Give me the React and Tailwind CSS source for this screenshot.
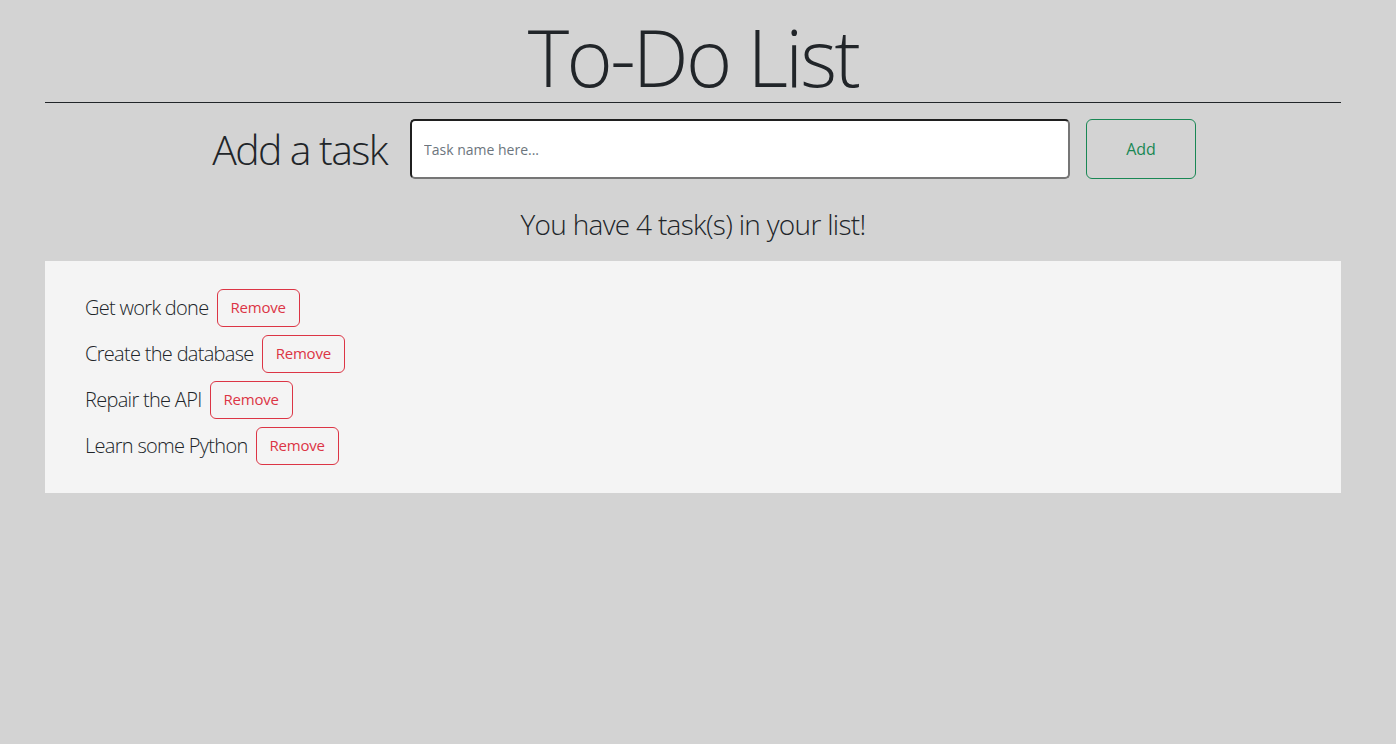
import { useState } from 'react';

const FONT = { fontFamily: '"Open Sans", "Noto Sans", sans-serif' };

// ─── Task Row ────────────────────────────────────────────────────────────────
function TaskRow({ task, onRemove }) {
  return (
    <div className="flex items-center gap-2">
      <span className="text-[20px] font-light text-[#212529] leading-[1.2] tracking-[-0.7px]">{task.name}</span>
      <button
        onClick={() => onRemove(task.id)}
        className="h-[38px] px-[13px] text-[15px] text-[#dc3545] border border-[#dc3545] rounded-[6px] bg-transparent tracking-[-0.2px]"
      >
        Remove
      </button>
    </div>
  );
}

// ─── Main ────────────────────────────────────────────────────────────────────
export default function App() {
  const [tasks, setTasks] = useState([
    { id: 1, name: 'Get work done' },
    { id: 2, name: 'Create the database' },
    { id: 3, name: 'Repair the API' },
    { id: 4, name: 'Learn some Python' },
  ]);
  const [draft, setDraft] = useState('');

  const addTask = () => {
    if (!draft.trim()) return;
    setTasks(t => [...t, { id: Date.now(), name: draft.trim() }]);
    setDraft('');
  };

  return (
    <div className="min-h-screen bg-[#d3d3d3] text-[#212529]" style={FONT}>
      <div className="ml-[45px] w-[1296px]">
        {/* Title */}
        <div className="pt-[17px] text-center">
          <h1 className="text-[79px] font-light leading-none h-[80px] tracking-[-2.7px]">To-Do List</h1>
        </div>
        <div className="mt-[5px] h-px bg-[#212529]" />

        {/* Add row */}
        <div className="mt-[16px] flex items-center h-[60px]">
          <div className="w-[342px] text-right text-[41px] font-light leading-none tracking-[-1.6px]">
            Add a task
          </div>
          <input
            value={draft}
            onChange={e => setDraft(e.target.value)}
            placeholder="Task name here..."
            className="ml-[23px] w-[660px] h-[60px] px-[12px] text-[14px] bg-white rounded-[5px] border-2 border-t-[#1f1f1f] border-l-[#1f1f1f] border-b-[#767676] border-r-[#767676] placeholder:text-[#6c757d] outline-none"
          />
          <button
            onClick={addTask}
            className="ml-[16px] w-[110px] h-[60px] text-[16px] text-[#198754] border border-[#198754] rounded-[6px]"
          >
            Add
          </button>
        </div>

        {/* Count */}
        <div className="mt-[29px] text-center text-[28px] font-light leading-[1.2] tracking-[-0.7px]">
          You have {tasks.length} task(s) in your list!
        </div>

        {/* Task list */}
        <div className="mt-[19px] bg-[#f4f4f4] px-[40px] py-[28px] flex flex-col gap-2">
          {tasks.map(task => (
            <TaskRow key={task.id} task={task} onRemove={id => setTasks(t => t.filter(x => x.id !== id))} />
          ))}
        </div>
      </div>
    </div>
  );
}
